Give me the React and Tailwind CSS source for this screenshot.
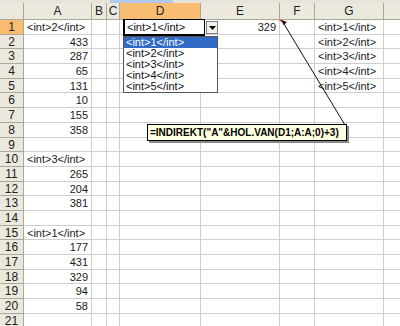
import React from 'react';

const COLS = ['A', 'B', 'C', 'D', 'E', 'F', 'G', ''];

// row data: [A, E, G]; A is either a number (right) or a tag (left)
const ROWS = [
  ['<int>2</int>', '329', '<int>1</int>'],
  ['433', '', '<int>2</int>'],
  ['287', '', '<int>3</int>'],
  ['65', '', '<int>4</int>'],
  ['131', '', '<int>5</int>'],
  ['10', '', ''],
  ['155', '', ''],
  ['358', '', ''],
  ['', '', ''],
  ['<int>3</int>', '', ''],
  ['265', '', ''],
  ['204', '', ''],
  ['381', '', ''],
  ['', '', ''],
  ['<int>1</int>', '', ''],
  ['177', '', ''],
  ['431', '', ''],
  ['329', '', ''],
  ['94', '', ''],
  ['58', '', ''],
  ['', '', ''],
];

const OPTIONS = ['<int>1</int>', '<int>2</int>', '<int>3</int>', '<int>4</int>', '<int>5</int>'];

const font = { fontFamily: '"Liberation Sans", Arial, sans-serif' };

function Cell({ children, align = 'left' }) {
  return (
    <div
      className={`h-[14.7px] border-r border-b border-[#cfcfcf] overflow-hidden whitespace-nowrap leading-[14px] text-[11px] text-[#1a1a1a] ${
        align === 'right' ? 'text-right pr-[3px]' : 'pl-[3px]'
      }`}
    >
      {children}
    </div>
  );
}

export default function App() {
  return (
    <div className="w-[400px] h-[326px] overflow-hidden bg-white relative" style={font}>
      {/* top strip */}
      <div className="h-[3px] flex bg-[#e6e4da]">
        <div className="w-[110px]" />
        <div className="w-[63px] bg-[#b4c7ec]" />
      </div>

      <div className="flex">
        {/* window edge */}
        <div className="w-[3px] bg-[#1d4fc9] self-stretch" />

        <div className="grid grid-cols-[24px_68px_15px_13px_81px_79px_35px_69px_20px]">
          {/* header row */}
          <div className="h-[17px] bg-[#ebe9de] border-r border-b border-[#aca899]" />
          {COLS.map((c, i) => (
            <div
              key={i}
              className={`h-[17px] border-r border-b border-[#aca899] text-[12px] leading-[16px] text-center text-[#222] ${
                c === 'D' ? 'bg-[#f8bd72]' : 'bg-[#ebe9de]'
              }`}
            >
              {c}
            </div>
          ))}

          {ROWS.map(([a, e, g], i) => {
            const isTag = a.startsWith('<');
            return (
              <React.Fragment key={i}>
                <div
                  className={`h-[14.7px] border-r border-b border-[#aca899] text-[12px] leading-[14px] text-center text-[#222] ${
                    i === 0 ? 'bg-[#f8bd72]' : 'bg-[#ebe9de]'
                  }`}
                >
                  {i + 1}
                </div>
                <Cell align={isTag ? 'left' : 'right'}>{a}</Cell>
                <Cell />
                <Cell />
                <Cell />
                <Cell align="right">{e}</Cell>
                <Cell />
                <Cell>{g}</Cell>
                <Cell />
              </React.Fragment>
            );
          })}
        </div>
      </div>

      {/* D1 in-cell dropdown */}
      <div className="absolute left-[123px] top-[19px] w-[82px] h-[17px] bg-white border-2 border-black border-t border-r pl-[2px] text-[11px] leading-[14px] text-[#111]">
        &lt;int&gt;1&lt;/int&gt;
      </div>
      <div className="absolute left-[206px] top-[21px] w-[12px] h-[13px] bg-[#f2f1ec] border border-[#7f7f7f] flex items-center justify-center">
        <svg width="7" height="4" viewBox="0 0 7 4">
          <path d="M0 0h7L3.5 4z" fill="#000" />
        </svg>
      </div>
      <div className="absolute left-[123px] top-[36px] w-[95px] bg-white border border-[#555]">
        {OPTIONS.map((o, i) => (
          <div
            key={o}
            className={`h-[11px] leading-[11px] text-[11px] pl-[2px] ${
              i === 0 ? 'bg-[#316ac5] text-white' : 'text-[#111]'
            }`}
          >
            {o}
          </div>
        ))}
      </div>

      {/* comment arrow */}
      <svg className="absolute left-0 top-0 pointer-events-none" width="400" height="326">
        <path d="M279 20h4v3z" fill="#e01010" />
        <line x1="284" y1="24" x2="345" y2="125" stroke="#111" strokeWidth="1" />
        <path d="M282 20.5l5 1.5-3.5 3z" fill="#000" />
      </svg>

      {/* comment box */}
      <div className="absolute left-[147px] top-[124px] w-[200px] h-[17px] bg-[#ffffe1] border border-black shadow-[2px_2px_0_#8a8a8a] flex items-center pl-[2px]">
        <span className="text-[10px] font-bold text-black whitespace-nowrap leading-none">
          =INDIREKT("A"&amp;HOL.VAN(D1;A:A;0)+3)
        </span>
      </div>
    </div>
  );
}
